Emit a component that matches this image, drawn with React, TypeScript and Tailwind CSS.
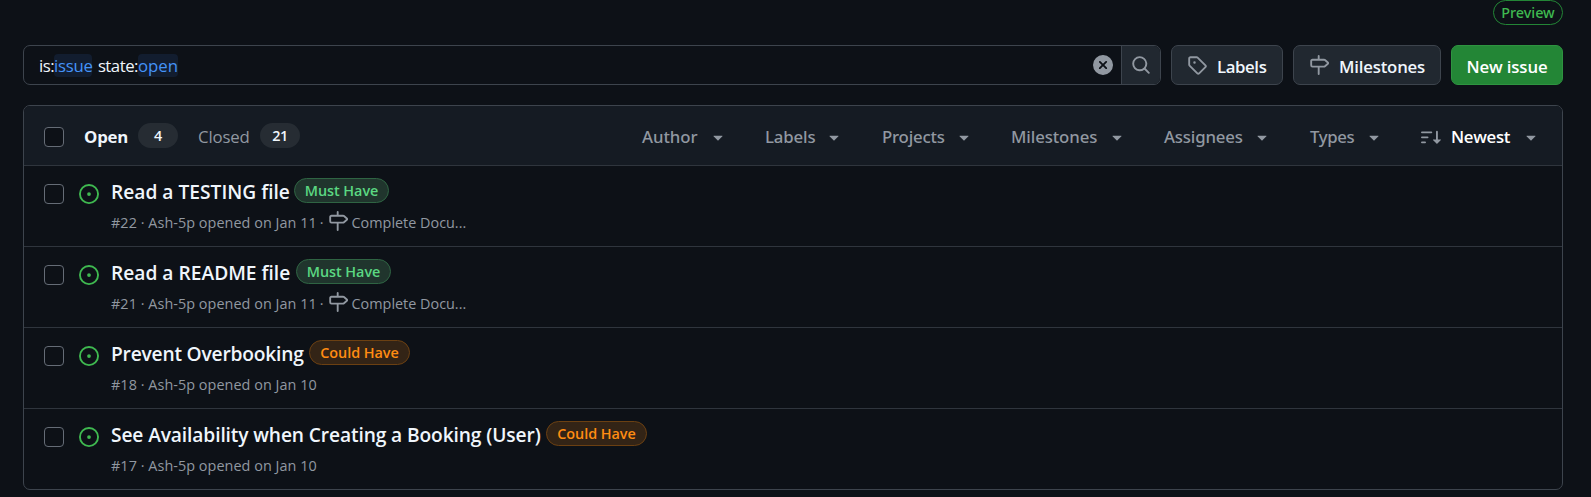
import React from "react";

const ICONS = {
  search:
    "M10.68 11.74a6 6 0 0 1-7.922-8.982 6 6 0 0 1 8.982 7.922l3.04 3.04a.749.749 0 0 1-.326 1.275.749.749 0 0 1-.734-.215ZM11.5 7a4.499 4.499 0 1 0-8.997 0A4.499 4.499 0 0 0 11.5 7Z",
  milestone:
    "M7.75 0a.75.75 0 0 1 .75.75V3h3.634c.414 0 .814.147 1.13.414l2.07 1.75a1.75 1.75 0 0 1 0 2.672l-2.07 1.75a1.75 1.75 0 0 1-1.13.414H8.5v5.25a.75.75 0 0 1-1.5 0V10H2.75A1.75 1.75 0 0 1 1 8.25v-3.5C1 3.784 1.784 3 2.75 3H7V.75A.75.75 0 0 1 7.75 0Zm4.384 8.5a.25.25 0 0 0 .161-.06l2.07-1.75a.248.248 0 0 0 0-.38l-2.07-1.75a.25.25 0 0 0-.161-.06H2.75a.25.25 0 0 0-.25.25v3.5c0 .138.112.25.25.25h9.384Z",
  tag: "M1 7.775V2.75C1 1.784 1.784 1 2.75 1h5.025c.464 0 .91.184 1.238.513l6.25 6.25a1.75 1.75 0 0 1 0 2.474l-5.026 5.026a1.75 1.75 0 0 1-2.474 0l-6.25-6.25A1.752 1.752 0 0 1 1 7.775Zm1.5 0c0 .066.026.13.073.177l6.25 6.25a.25.25 0 0 0 .354 0l5.025-5.025a.25.25 0 0 0 0-.354l-6.25-6.25a.25.25 0 0 0-.177-.073H2.75a.25.25 0 0 0-.25.25ZM6 5a1 1 0 1 1 0 2 1 1 0 0 1 0-2Z",
  issue:
    "M8 9.5a1.5 1.5 0 1 0 0-3 1.5 1.5 0 0 0 0 3ZM8 0a8 8 0 1 1 0 16A8 8 0 0 1 8 0ZM1.5 8a6.5 6.5 0 1 0 13 0 6.5 6.5 0 0 0-13 0Z",
  caret:
    "m4.427 7.427 3.396 3.396a.25.25 0 0 0 .354 0l3.396-3.396A.25.25 0 0 0 11.396 7H4.604a.25.25 0 0 0-.177.427Z",
  clear:
    "M2.343 13.657A8 8 0 1 1 13.658 2.343 8 8 0 0 1 2.343 13.657ZM6.03 4.97a.751.751 0 0 0-1.042.018.751.751 0 0 0-.018 1.042L6.94 8 4.97 9.97a.749.749 0 0 0 .326 1.275.749.749 0 0 0 .734-.215L8 9.06l1.97 1.97a.749.749 0 0 0 1.275-.326.749.749 0 0 0-.215-.734L9.06 8l1.97-1.97a.749.749 0 0 0-.326-1.275.749.749 0 0 0-.734.215L8 6.94Z",
  sort: "M0 4.25a.75.75 0 0 1 .75-.75h7.5a.75.75 0 0 1 0 1.5H.75A.75.75 0 0 1 0 4.25Zm0 4a.75.75 0 0 1 .75-.75h4.5a.75.75 0 0 1 0 1.5H.75A.75.75 0 0 1 0 8.25Zm0 4a.75.75 0 0 1 .75-.75h2.5a.75.75 0 0 1 0 1.5H.75a.75.75 0 0 1-.75-.75ZM13.5 10h2.25a.25.25 0 0 1 .177.427l-3 3a.25.25 0 0 1-.354 0l-3-3A.25.25 0 0 1 9.75 10H12V3.75a.75.75 0 0 1 1.5 0V10Z",
};

function Icon({ name, className = "" }: { name: keyof typeof ICONS; className?: string }) {
  return (
    <svg viewBox="0 0 16 16" fill="currentColor" className={`size-5 shrink-0 ${className}`} aria-hidden="true">
      <path fillRule={name === "caret" ? "nonzero" : "evenodd"} d={ICONS[name]} />
    </svg>
  );
}

function Checkbox() {
  return <span role="checkbox" aria-checked="false" className="size-5 shrink-0 rounded-[4px] border border-[#656c76] bg-[#0d1117]" />;
}

function Count({ children }: { children: React.ReactNode }) {
  return (
    <span className="mb-[3px] flex h-[25px] w-10 items-center justify-center rounded-full bg-[#262c33] text-[14.4px] font-semibold tracking-[-0.4px] text-[#f0f6fc]">
      {children}
    </span>
  );
}

const FILTERS = [
  { name: "Author", width: "w-[123px]", text: "w-[66px] tracking-[-0.05px]" },
  { name: "Labels", width: "w-[117px]", text: "w-[59px] tracking-[-0.15px]" },
  { name: "Projects", width: "w-[129px]", text: "w-[72px] tracking-[-0.2px]" },
  { name: "Milestones", width: "w-[153px]", text: "w-[96px] tracking-[-0.1px]" },
  { name: "Assignees", width: "w-[146px]", text: "w-[88px] tracking-[-0.15px]" },
  { name: "Types", width: "w-[111px]", text: "w-[54px] tracking-[-0.35px]" },
];

const TONES = {
  green: "w-[95px] border-[#2f6443] bg-[#20352d] text-[#5bd882]",
  orange: "w-[101px] border-[#6b4012] bg-[#332416] text-[#ff8c12]",
};

const ISSUES: {
  id: number;
  title: string;
  width: string;
  label: string;
  tone: keyof typeof TONES;
  date: string;
  milestone?: string;
}[] = [
  { id: 22, title: "Read a TESTING file", width: "w-[183px]", label: "Must Have", tone: "green", date: "Jan 11", milestone: "Complete Docu..." },
  { id: 21, title: "Read a README file", width: "w-[185px]", label: "Must Have", tone: "green", date: "Jan 11", milestone: "Complete Docu..." },
  { id: 18, title: "Prevent Overbooking", width: "w-[198px] tracking-[-0.2px]", label: "Could Have", tone: "orange", date: "Jan 10" },
  { id: 17, title: "See Availability when Creating a Booking (User)", width: "w-[435px] tracking-[-0.12px]", label: "Could Have", tone: "orange", date: "Jan 10" },
];

export default function App() {
  return (
    <div className="h-[497px] overflow-hidden bg-[#0d1117] pr-7 pl-[23px] font-['Open_Sans',sans-serif] whitespace-nowrap text-[#f0f6fc]">
      <div className="flex h-[25px] justify-end">
        <span className="flex w-[70px] items-center justify-center rounded-full border border-[#238636] font-['Noto_Sans',sans-serif] text-[14.4px] font-medium tracking-[-0.05px] text-[#3fb950]">
          Preview
        </span>
      </div>

      <div className="mt-5 flex h-10 gap-2.5">
        <div className="flex w-[1138px] overflow-hidden rounded-[7px] border border-[#3d444d]">
          <div className="flex grow items-center pl-[15px] text-[16.8px]">
            <span className="flex h-[23px] w-[15px] items-center pt-0.5 tracking-[-0.5px]">is:</span>
            <span className="flex h-[23px] w-[38px] items-center rounded-[4px] bg-[#121d2f] pt-0.5 tracking-[-0.25px] text-[#4493f8]">issue</span>
            <span className="flex h-[23px] w-[46px] items-center justify-end pt-0.5 tracking-[-0.5px]">state:</span>
            <span className="flex h-[23px] w-10 items-center rounded-[4px] bg-[#121d2f] pt-0.5 text-[#4493f8]">open</span>
          </div>
          <Icon name="clear" className="mt-[9px] mr-2 text-[#9198a1]" />
          <div className="flex w-[39px] items-center justify-center border-l border-[#3d444d] bg-[#212830] text-[#9198a1]">
            <Icon name="search" />
          </div>
        </div>
        <button className="flex w-28 items-center rounded-[7px] border border-[#3d444d] bg-[#212830] pl-[15px] text-[16.8px] font-semibold">
          <Icon name="tag" className="text-[#9198a1]" />
          <span className="ml-2.5 pt-[3px] tracking-[-0.4px]">Labels</span>
        </button>
        <button className="flex w-[148px] items-center rounded-[7px] border border-[#3d444d] bg-[#212830] pl-[15px] text-[16.8px] font-semibold">
          <Icon name="milestone" className="text-[#9198a1]" />
          <span className="ml-2.5 pt-[3px] tracking-[-0.2px]">Milestones</span>
        </button>
        <button className="flex w-28 items-center justify-center rounded-[7px] border border-[#2e9440] bg-[#238636] pt-[3px] text-[16.8px] font-semibold tracking-[-0.15px] text-white">
          New issue
        </button>
      </div>

      <div className="mt-5 h-[385px] overflow-hidden rounded-[7px] border border-[#3d444d]">
        <div className="flex h-[59px] items-center bg-[#151b23] pt-[3px] pl-5 text-[16.8px]">
          <Checkbox />
          <span className="ml-5 w-[54px] font-bold tracking-[-0.2px]">Open</span>
          <Count>4</Count>
          <span className="ml-5 w-[62px] tracking-[-0.15px] text-[#9198a1]">Closed</span>
          <Count>21</Count>
          <div className="ml-[342px] flex font-['Noto_Sans',sans-serif] font-medium text-[#9198a1]">
            {FILTERS.map((f) => (
              <div key={f.name} className={`flex items-center ${f.width}`}>
                <span className={f.text}>{f.name}</span>
                <Icon name="caret" />
              </div>
            ))}
            <div className="flex items-center">
              <Icon name="sort" />
              <span className="ml-2.5 w-[70px] font-['Open_Sans',sans-serif] font-semibold tracking-[-0.3px] text-white">Newest</span>
              <Icon name="caret" />
            </div>
          </div>
        </div>

        {ISSUES.map((issue) => (
          <div key={issue.id} className="flex h-[81px] border-t border-[#2f353d] pl-5">
            <div className="flex h-5 pt-[18px]">
              <Checkbox />
              <Icon name="issue" className="ml-[15px] text-[#3fb950]" />
            </div>
            <div className="ml-3 pt-3">
              <div className="flex h-[28px]">
                <span className={`text-[19.2px] leading-[28px] font-semibold ${issue.width}`}>{issue.title}</span>
                <span className={`flex h-[25px] items-center justify-center rounded-full border text-[14.4px] font-semibold tracking-[-0.05px] ${TONES[issue.tone]}`}>
                  {issue.label}
                </span>
              </div>
              <div className="mt-[5px] flex h-6 items-center text-[14.4px] text-[#9198a1]">
                <span className="tracking-[0.05px]">
                  #{issue.id} · Ash-5p opened on {issue.date}
                </span>
                {issue.milestone && (
                  <>
                    <span className="ml-[3px]">·</span>
                    <Icon name="milestone" className="mb-[5px] ml-1" />
                    <span className="ml-1">{issue.milestone}</span>
                  </>
                )}
              </div>
            </div>
          </div>
        ))}
      </div>
    </div>
  );
}
